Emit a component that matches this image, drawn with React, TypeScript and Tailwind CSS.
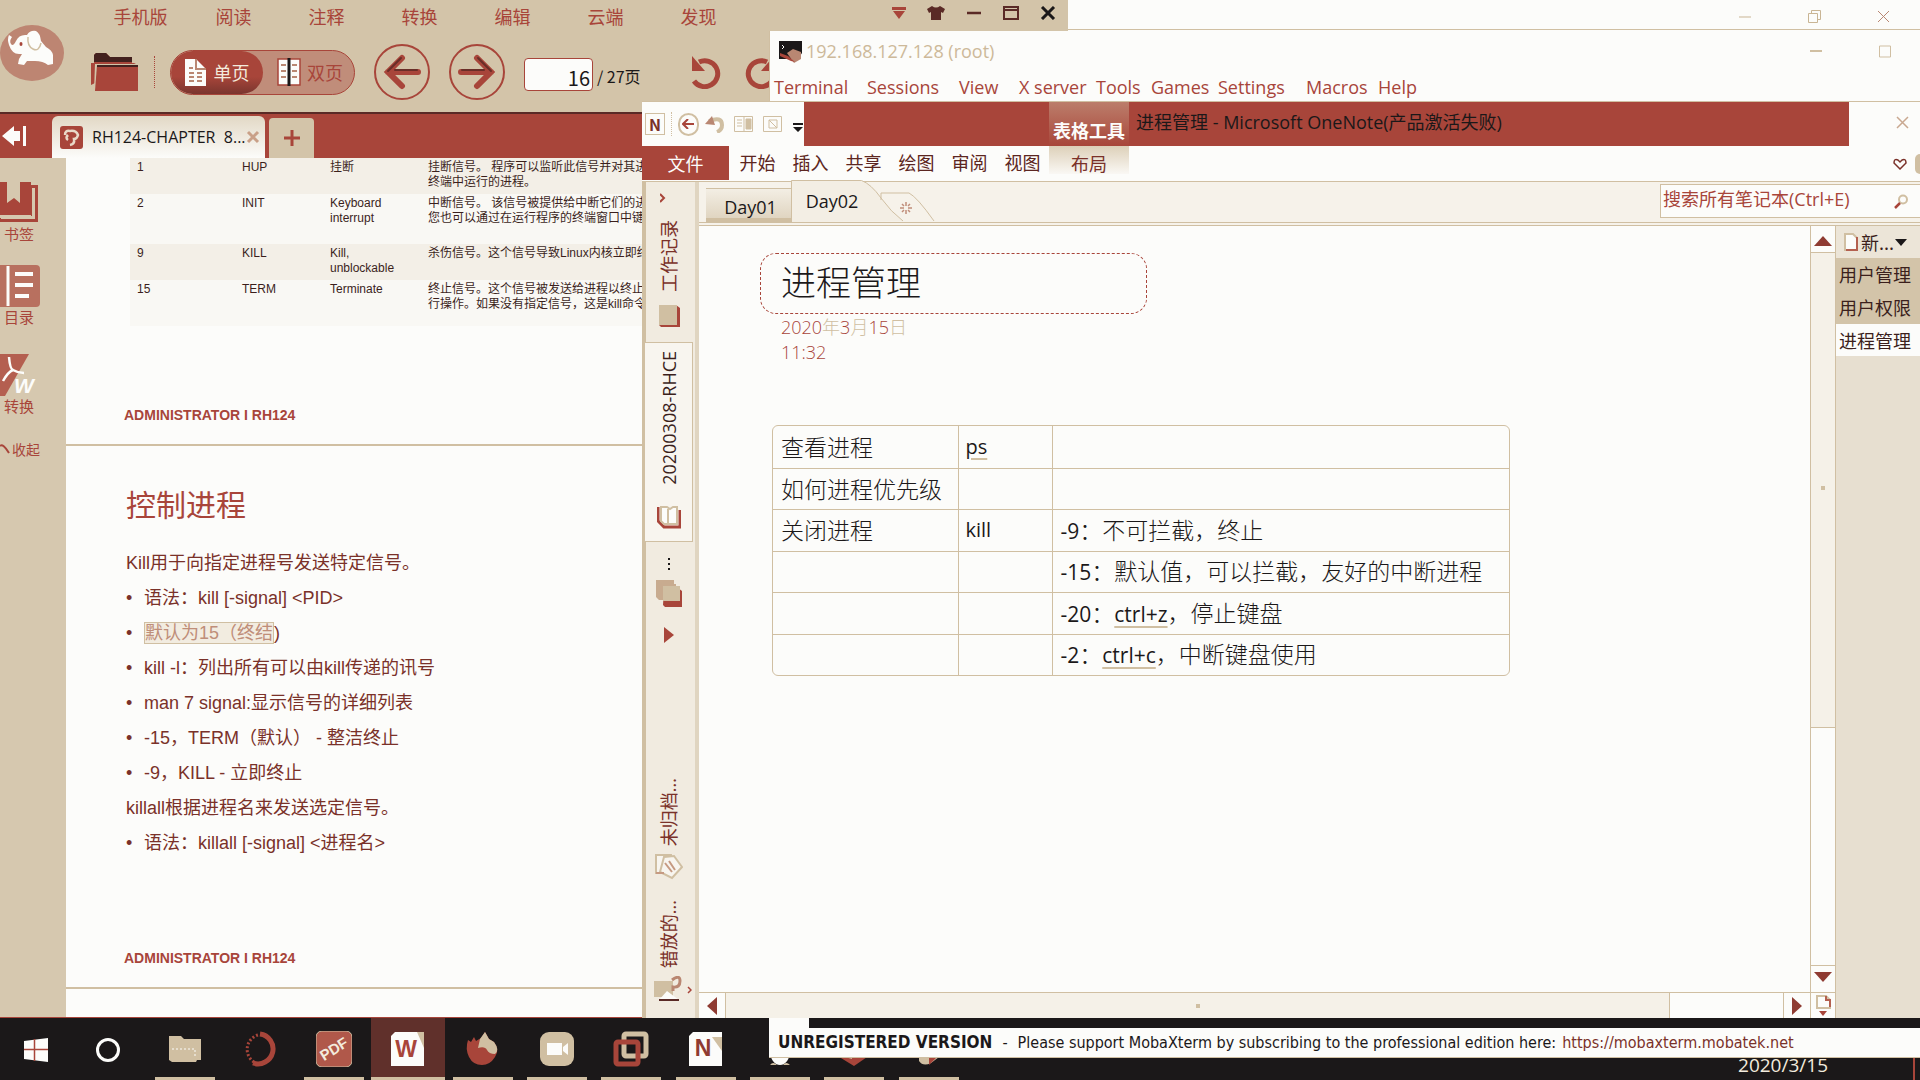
import React from "react";

const TASK_SLOTS = [
  "folder",
  "swirl",
  "pdf",
  "wps",
  "firefox",
  "zoom",
  "vmware",
  "onenote",
  "qq",
  "moba",
  "paint",
] as const;

const SIGNALS = [
  { n: "1", name: "HUP", def: ["挂断"], text: ["挂断信号。 程序可以监听此信号并对其进行", "终端中运行的进程。"], h: "h-9 bg-[#f3efe7]" },
  { n: "2", name: "INIT", def: ["Keyboard", "interrupt"], text: ["中断信号。 该信号被提供给中断它们的进程", "您也可以通过在运行程序的终端窗口中键入"], h: "h-[50px] bg-[#f9f8f4]" },
  { n: "9", name: "KILL", def: ["Kill,", "unblockable"], text: ["杀伤信号。这个信号导致Linux内核立即终止"], h: "h-9 bg-[#f3efe7]" },
  { n: "15", name: "TERM", def: ["Terminate"], text: ["终止信号。这个信号被发送给进程以终止执", "行操作。如果没有指定信号，这是kill命令的"], h: "h-[46px] bg-[#f9f8f4]" },
];

function PdfHeader() {
  return (
    <header className="flex h-[112px] bg-[#d3c4a9]">
      <div className="w-[90px] shrink-0 pt-6">
        <svg viewBox="0 0 64 58" className="h-[58px] w-16" aria-label="logo">
          <ellipse cx="32" cy="29" rx="32" ry="28" fill="#bd8572" />
          <path
            d="M9 11q-2 4 0 10q3 9 10 9l3 0-3 5-1 5 6 1 3-4 8 0q8 0 13 4l5-1 0-9q-1-5-7-8l-5-6q-1-8-5-10q-6-1-9 4q-8-1-11 6q-3 6-5 3q-2-3 1-7z"
            fill="#fcfcfa"
          />
          <ellipse cx="21" cy="20" rx="1.500" ry="2" fill="#a8453a" />
          <path d="M28 13q-1 9 5 12t8-6" stroke="#d0bfa2" strokeWidth="1.500" fill="none" />
        </svg>
      </div>
      <div className="flex min-w-0 flex-1 flex-col">
        <div className="flex h-[34px] shrink-0 items-center">
          <nav className="flex pb-0.5 pl-1">
            {["手机版", "阅读", "注释", "转换", "编辑", "云端", "发现"].map((t) => (
              <a key={t} href="#" className="w-[93px] text-center text-[18px] leading-6 text-[#a8453a]">
                {t}
              </a>
            ))}
          </nav>
          <div className="ml-auto flex items-center gap-[21px] pr-3 pb-2 text-[#a8453a]">
            <button aria-label="菜单">
              <svg viewBox="0 0 14 14" className="size-3.5" fill="currentColor">
                <path d="M0 1h14v3H0zM1 5h12l-6 8z" />
              </svg>
            </button>
            <button aria-label="皮肤">
              <svg viewBox="0 0 18 14" className="h-3.5 w-[18px]" fill="#5a2a26">
                <path d="M5 0q4 3 8 0l5 3-2 4-2-1v8H4V6L2 7 0 3z" />
              </svg>
            </button>
            <button aria-label="最小化">
              <svg viewBox="0 0 16 14" className="h-3.5 w-4" stroke="#5a2a26" strokeWidth="2.500">
                <path d="M1 7h14" />
              </svg>
            </button>
            <button aria-label="最大化">
              <svg viewBox="0 0 16 14" className="h-3.5 w-4" stroke="#5a2a26" strokeWidth="2" fill="none">
                <path d="M1 1h14v12H1zM1 4h14" />
              </svg>
            </button>
            <button aria-label="关闭">
              <svg viewBox="0 0 16 14" className="h-3.5 w-4" stroke="#1b1819" strokeWidth="3">
                <path d="M2 1l12 12M14 1L2 13" />
              </svg>
            </button>
          </div>
        </div>
        <div className="flex h-[76px] shrink-0 items-center">
          <button aria-label="打开">
            <svg viewBox="0 0 48 38" className="h-[38px] w-12">
              <path d="M1 32V10h3V2l2-2h10l4 4h22v6h4" fill="#a8453a" />
              <path d="M4 8V2l2-2h10l4 4h22v5H4z" fill="#43211e" />
              <path d="M5 11h43l-2 27H4z" fill="#d3c4a9" />
              <path d="M7 12h41v26H5z" fill="#a8453a" />
              <path d="M7 13h41" stroke="#43211e" strokeWidth="2" />
            </svg>
          </button>
          <span className="mr-[15px] ml-4 h-8 border-l border-dotted border-[#a8453a]" />
          <div className="flex h-[45px] w-[185px] shrink-0 overflow-hidden rounded-full border border-[#a8453a] bg-[#c08d7a]">
            <button className="flex w-[92px] items-center justify-center gap-2 rounded-full bg-gradient-to-b from-[#a8453a] from-60% to-[#7a352e] text-[18px] text-[#f3ebdd]">
              <svg viewBox="0 0 21 27" className="h-[27px] w-[21px]">
                <path d="M0 0h11l10 10v17H0z" fill="#fcfcfa" />
                <path d="M11 0v10h10M4 9h4M4 14h5m3 0h5M4 18h5m3 0h5M4 22h5m3 0h5" stroke="#b98772" strokeWidth="2" fill="none" />
              </svg>
              单页
            </button>
            <button className="flex flex-1 items-center gap-1.5 pl-3.5 text-[18px] text-[#a8453a]">
              <svg viewBox="0 0 24 28" className="h-7 w-6">
                <path d="M1 1h22v26H1z" fill="#fcfcfa" stroke="#a8453a" strokeWidth="1.500" />
                <path d="M12 0v28" stroke="#1b1819" strokeWidth="3" />
                <path d="M4 7h5M4 13h5M4 19h5m6-12h5m-5 6h5m-5 6h5" stroke="#b98772" strokeWidth="2" />
              </svg>
              双页
            </button>
          </div>
          <button aria-label="上一页" className="ml-[19px] flex size-14 shrink-0 items-center justify-center rounded-full border-2 border-[#a8453a]">
            <svg viewBox="0 0 38 36" className="h-9 w-[38px]" fill="none" stroke="#a8453a" strokeWidth="6" strokeLinecap="round">
              <path d="M35 18H5M19 4L5 18l14 14" />
              <path d="M18 4L5 17M12 16h22" stroke="#6a2e28" strokeWidth="2" />
            </svg>
          </button>
          <button aria-label="下一页" className="ml-[19px] flex size-14 shrink-0 items-center justify-center rounded-full border-2 border-[#a8453a]">
            <svg viewBox="0 0 38 36" className="h-9 w-[38px]" fill="none" stroke="#a8453a" strokeWidth="6" strokeLinecap="round">
              <path d="M3 18h30M19 4l14 14-14 14" />
              <path d="M20 4l13 13M4 16h22" stroke="#6a2e28" strokeWidth="2" />
            </svg>
          </button>
          <input
            aria-label="页码"
            defaultValue="16"
            className="ml-[19px] mt-1 h-[33px] w-[69px] rounded-sm border border-[#a8453a] bg-[#fcfcfa] pt-1.5 pr-0.5 text-right text-[20px] text-[#1b1819]"
          />
          <span className="ml-1 pt-2 text-[16px] text-[#1b1819]">/ 27页</span>
          <div className="ml-[50px] flex gap-4 text-[#a8453a]">
            <button aria-label="撤销">
              <svg viewBox="0 0 34 34" className="size-[34px]" fill="none" stroke="currentColor" strokeWidth="5">
                <path d="M8 7a13 13 0 1 1-5 19" />
                <path d="M1 1v15h13z" fill="currentColor" stroke="none" />
              </svg>
            </button>
            <button aria-label="重做">
              <svg viewBox="0 0 34 34" className="size-[34px]" fill="none" stroke="currentColor" strokeWidth="5">
                <path d="M26 7a13 13 0 1 0 5 19" />
                <path d="M33 1v15H20z" fill="currentColor" stroke="none" />
              </svg>
            </button>
          </div>
        </div>
      </div>
    </header>
  );
}

function PdfTabs() {
  return (
    <div className="flex h-[46px] shrink-0 items-end border-t-2 border-[#5a2a26] bg-[#a8453a]">
      <button aria-label="收起侧栏" className="w-[52px] pb-3">
        <svg viewBox="0 0 24 20" className="ml-0.5 h-5 w-6" fill="#fcfcfa">
          <path d="M0 10L12 0v5h6v10h-6v5zM21 0h3v20h-3z" />
        </svg>
      </button>
      <div className="flex h-[42px] w-[213px] items-center rounded-t-md bg-gradient-to-b from-[#e2d8c5] to-[#fcfcfa] pl-2">
        <svg viewBox="0 0 23 23" className="size-[23px] shrink-0">
          <rect width="23" height="23" rx="3" fill="#a8453a" />
          <path d="M5 9q0-5 5-4 6-1 8 4-1 4-4 4 1 5-4 6M8 9q-3 3 0 5" stroke="#e9d9c8" strokeWidth="2.500" fill="none" />
        </svg>
        <span className="ml-[9px] whitespace-pre font-['Open_Sans','Noto_Sans_CJK_SC',sans-serif] text-[16px] text-[#1b1819]">RH124-CHAPTER  8...</span>
        <button aria-label="关闭标签">
          <svg viewBox="0 0 14 14" className="size-3.5" stroke="#c9a088" strokeWidth="3">
            <path d="M2 2l10 10M12 2L2 12" />
          </svg>
        </button>
      </div>
      <button aria-label="新建标签" className="ml-1 flex h-10 w-[45px] items-center justify-center rounded-t-sm bg-[#d3c4a9]">
        <svg viewBox="0 0 16 16" className="size-4" stroke="#a8453a" strokeWidth="3">
          <path d="M8 0v16M0 8h16" />
        </svg>
      </button>
    </div>
  );
}

function PdfSidebar() {
  const label = "h-5 pl-1 text-[15px] leading-5 text-[#a8453a]";
  return (
    <aside className="w-[66px] shrink-0 bg-[#d6c8af] pt-6">
      <button className="flex h-[83px] w-full flex-col items-start">
        <svg viewBox="0 0 40 42" className="h-[42px] w-10">
          <path d="M31 3h7v37H0v-4h31z" fill="#a8453a" />
          <path d="M0 0h31v33H0z" fill="#a8453a" />
          <path d="M32 6h3v31H1v-3h31z" fill="#d6c8af" />
          <path d="M7 0h13v21l-6-5-7 5z" fill="#d6c8af" />
        </svg>
        <span className={label}>书签</span>
      </button>
      <button className="flex h-[89px] w-full flex-col items-start">
        <svg viewBox="0 0 40 42" className="h-[42px] w-10">
          <rect x="-4" width="44" height="42" rx="4" fill="#b8705f" />
          <path d="M8 1v40" stroke="#fcfcfa" strokeWidth="3" />
          <path d="M15 9h18M15 20h18M15 31h14" stroke="#fcfcfa" strokeWidth="4" />
        </svg>
        <span className={label}>目录</span>
      </button>
      <button className="flex h-[85px] w-full flex-col items-start">
        <svg viewBox="0 0 40 42" className="h-[42px] w-10">
          <path d="M0 0h29L5 42H0z" fill="#b45f50" />
          <path d="M9 3q1 12 4 13 5 3 11 3M13 16Q8 18 3 27" stroke="#fcfcfa" strokeWidth="2.500" fill="none" />
          <text x="14" y="39" fontFamily="Liberation Sans" fontStyle="italic" fontWeight="700" fontSize="21" fill="#fcfcfa">W</text>
        </svg>
        <span className={label}>转换</span>
      </button>
      <button className="flex h-5 items-center text-[14px] text-[#a8453a]">
        <svg viewBox="0 0 10 10" className="mr-0.5 size-2.5" stroke="currentColor" strokeWidth="2" fill="none">
          <path d="M0 2q3-3 9 7" />
        </svg>
        收起
      </button>
    </aside>
  );
}

function PdfDocument() {
  const bullets = [
    <>语法：kill [-signal] &lt;PID&gt;</>,
    <>
      <span className="border border-[#d0bfa2] bg-[#f2ece0] text-[#bf8e79]">默认为15（终结</span>)
    </>,
    <>kill -l：列出所有可以由kill传递的讯号</>,
    <>man 7 signal:显示信号的详细列表</>,
    <>-15，TERM（默认） - 整洁终止</>,
    <>-9，KILL - 立即终止</>,
  ];
  const li = "flex before:w-[18px] before:content-['•']";
  return (
    <main className="min-w-0 flex-1 overflow-hidden bg-[#fcfcfa] font-['Liberation_Sans','Noto_Sans_CJK_SC',sans-serif] whitespace-nowrap">
      <section className="h-[288px] border-b-2 border-[#d0bfa2] pl-16">
        <table className="w-full table-fixed border-collapse text-[12px] leading-[15px] text-[#3b1f1c]">
          <colgroup>
            <col className="w-[105px]" />
            <col className="w-[88px]" />
            <col className="w-[98px]" />
            <col />
          </colgroup>
          <tbody>
            {SIGNALS.map((s) => (
              <tr key={s.n} className={s.h}>
                <td className="pt-0.5 pl-[7px] align-top">{s.n}</td>
                <td className="pt-0.5 pl-[7px] align-top">{s.name}</td>
                <td className="pt-0.5 pl-[7px] align-top">{s.def.map((d) => <div key={d}>{d}</div>)}</td>
                <td className="pt-0.5 pl-[7px] align-top">{s.text.map((d) => <div key={d}>{d}</div>)}</td>
              </tr>
            ))}
          </tbody>
        </table>
        <p className="mt-[79px] -ml-1.5 text-[14px] leading-5 font-bold text-[#a8453a]">ADMINISTRATOR I RH124</p>
      </section>
      <section className="h-[543px] border-b-2 border-[#d0bfa2] pt-10 pl-[60px] text-[18px] leading-[35px] text-[#7a3129]">
        <h1 className="mb-5 text-[30px] leading-10 text-[#a8453a]">控制进程</h1>
        <p>Kill用于向指定进程号发送特定信号。</p>
        <ul>
          {bullets.map((b, i) => (
            <li key={i} className={li}>
              <span>{b}</span>
            </li>
          ))}
        </ul>
        <p>killall根据进程名来发送选定信号。</p>
        <ul>
          <li className={li}>
            <span>语法：killall [-signal] &lt;进程名&gt;</span>
          </li>
        </ul>
        <p className="mt-[87px] -ml-0.5 text-[14px] leading-5 font-bold text-[#a8453a]">ADMINISTRATOR I RH124</p>
      </section>
    </main>
  );
}

function PdfWindow() {
  return (
    <section className="absolute top-0 bottom-[62px] left-0 flex w-[1068px] flex-col border-b border-[#a8453a]">
      <PdfHeader />
      <PdfTabs />
      <div className="flex min-h-0 flex-1">
        <PdfSidebar />
        <PdfDocument />
      </div>
    </section>
  );
}

function MobaTitle() {
  const menu: [string, string][] = [
    ["Terminal", "w-[93px]"],
    ["Sessions", "w-[92px]"],
    ["View", "w-[60px]"],
    ["X server", "w-[77px]"],
    ["Tools", "w-[55px]"],
    ["Games", "w-[67px]"],
    ["Settings", "w-[88px]"],
    ["Macros", "w-[72px]"],
    ["Help", "w-[60px]"],
  ];
  return (
    <>
      <section className="absolute top-0 right-0 left-[1068px] flex h-[30px] items-center justify-end gap-14 border-b border-[#d0bfa2] bg-[#fcfcfa] pt-1 pr-[30px] text-[#c9b594]">
        <button aria-label="最小化">
          <svg viewBox="0 0 13 13" className="size-[13px]" stroke="currentColor"><path d="M0 7h12" /></svg>
        </button>
        <button aria-label="还原">
          <svg viewBox="0 0 13 13" className="size-[13px]" stroke="currentColor" fill="none"><path d="M.5 3.500h9v9h-9zM3.500 3V.5h9v9H10" /></svg>
        </button>
        <button aria-label="关闭">
          <svg viewBox="0 0 13 13" className="size-[13px]" stroke="#b98772"><path d="M1 1l11 11M12 1L1 12" /></svg>
        </button>
      </section>
      <section className="absolute top-[31px] right-0 left-[769px] h-[100px] border-l border-[#d0bfa2] bg-[#fcfcfa] font-['Open_Sans','Noto_Sans_CJK_SC',sans-serif]">
        <div className="flex h-[41px] items-center pl-[9px]">
          <svg viewBox="0 0 23 22" className="h-[22px] w-[23px]">
            <path d="M0 0h23v12l-4 6H0z" fill="#1b1819" />
            <path d="M8 12l6-4 8 3v7l-7 4z" fill="#b98772" />
            <path d="M1 12l8 3 7 6-4-1-11-5z" fill="#a8453a" />
            <path d="M3 4l2 2-2 2" stroke="#fcfcfa" fill="none" />
          </svg>
          <span className="ml-1 text-[18px] text-[#cdb999]">192.168.127.128 (root)</span>
          <div className="ml-auto flex gap-14 pr-7 text-[#d0bfa2]">
            <button aria-label="最小化"><svg viewBox="0 0 13 13" className="size-[13px]" stroke="currentColor" strokeWidth="2"><path d="M0 6h12" /></svg></button>
            <button aria-label="最大化"><svg viewBox="0 0 13 13" className="size-[13px]" stroke="currentColor" fill="none"><path d="M.5 1h11v11h-11z" /></svg></button>
          </div>
        </div>
        <nav className="flex h-[30px] items-center pl-1 text-[18px] text-[#a8453a]">
          {menu.map(([t, w]) => (
            <a key={t} href="#" className={w}>{t}</a>
          ))}
        </nav>
      </section>
    </>
  );
}

function OneNoteTop() {
  return (
    <>
      <div className="flex h-11 shrink-0 bg-[#fcfcfa]">
        <div className="flex w-[162px] items-center gap-1.5 pl-[3px]">
          <span className="flex h-[22px] w-[22px] items-center justify-center border border-[#d0bfa2] text-[16px] leading-none font-bold text-[#7a3129]">N</span>
          <span className="h-6 border-l border-dotted border-[#d0bfa2]" />
          <button aria-label="返回" className="flex size-[23px] items-center justify-center rounded-full border-2 border-[#d0bfa2]">
            <svg viewBox="0 0 12 10" className="h-2.5 w-3" stroke="#a8453a" strokeWidth="2" fill="none"><path d="M12 5H1M6 0L1 5l5 5" /></svg>
          </button>
          <button aria-label="撤消">
            <svg viewBox="0 0 19 18" className="h-[18px] w-[19px]" fill="none"><path d="M4 6q13-5 13 4 0 5-5 7" stroke="#d0bfa2" strokeWidth="4" /><path d="M0 9l7-8 3 9z" fill="#b98772" /></svg>
          </button>
          <button aria-label="停靠">
            <svg viewBox="0 0 19 18" className="ml-1 h-[18px] w-[19px]" fill="none" stroke="#d0bfa2"><path d="M.5 1.500h18v15H.5zM10 1v16M3 5h5M3 8h5M3 11h5" /><path d="M12 4h5v10h-5z" fill="#d0bfa2" /></svg>
          </button>
          <button aria-label="全页">
            <svg viewBox="0 0 19 18" className="ml-1 h-[18px] w-[19px]" fill="none" stroke="#d0bfa2"><path d="M.5 1.500h18v15H.5z" /><path d="M6 5h8v8H6zM6 5l8 8" /></svg>
          </button>
          <button aria-label="自定义" className="pt-2">
            <svg viewBox="0 0 12 10" className="ml-1 h-2.5 w-3" fill="#1b1819"><path d="M1 0h10v2H1zM1 4h10L6 9z" /></svg>
          </button>
        </div>
        <div className="flex min-w-0 flex-1 items-center bg-[#a8453a]">
          <div className="ml-[245px] flex h-full w-20 items-end justify-center bg-gradient-to-b from-[#bb7d6b] to-[#a8453a] pb-1 text-[18px] leading-6 font-bold text-[#fcfcfa]">表格工具</div>
          <h1 className="pb-1 pl-[7px] font-['Open_Sans','Noto_Sans_CJK_SC',sans-serif] text-[18px] whitespace-nowrap text-[#1b1819]">进程管理 - Microsoft OneNote(产品激活失败)</h1>
        </div>
        <div className="flex w-[71px] items-center justify-end pr-[11px]">
          <button aria-label="关闭"><svg viewBox="0 0 13 13" className="mb-1 size-[13px]" stroke="#c9a890" strokeWidth="1.500"><path d="M1 1l11 11M12 1L1 12" /></svg></button>
        </div>
      </div>
      <div className="flex h-9 shrink-0 border-b border-[#d0bfa2] bg-[#fcfcfa] text-[18px] text-[#5c2621]">
        <button className="h-[34px] w-[87px] bg-[#a8453a] text-[#fcfcfa]">文件</button>
        <nav className="flex pl-0.5">
          {["开始", "插入", "共享", "绘图", "审阅", "视图"].map((t) => (
            <button key={t} className="w-[53px] pb-0.5">{t}</button>
          ))}
        </nav>
        <button className="h-7 w-20 bg-gradient-to-b from-[#ddd0b9] to-[#faf8f4] pt-1 text-[#7a3129]">布局</button>
        <div className="ml-auto flex items-center gap-2">
          <button aria-label="喜欢"><svg viewBox="0 0 14 12" className="h-3 w-3.5" fill="none" stroke="#7a3129" strokeWidth="1.500"><path d="M7 11L1 5q0-5 4-3l2 2 2-2q4-2 4 3z" /></svg></button>
          <span className="h-5 w-[5px] rounded-l-full bg-[#d0bfa2]" />
        </div>
      </div>
    </>
  );
}

function NotebookRail() {
  const side = "rotate-180 font-['Open_Sans','Noto_Sans_CJK_SC',sans-serif] text-[18px] leading-6 whitespace-nowrap [text-orientation:sideways] [writing-mode:vertical-rl]";
  return (
    <aside className="flex w-[57px] shrink-0 flex-col items-center border-r-4 border-l-4 border-r-[#e0d5c1] border-l-[#d0bfa2] bg-[#f1ebe0] pr-1 text-[#7a3129]">
      <button aria-label="展开" className="mt-2 mr-3 h-4">
        <svg viewBox="0 0 6 10" className="h-2.5 w-1.5" fill="none" stroke="#a8453a" strokeWidth="2"><path d="M0 1l4 4-4 4" /></svg>
      </button>
      <button className="mt-3.5 flex h-[114px] flex-col items-center gap-3">
        <span className={side}>工作记录</span>
        <svg viewBox="0 0 24 24" className="size-6"><path d="M2 1h17l4 3v19H4l-2-2z" fill="#a8453a" /><path d="M2 1h18v20H2z" fill="#d0bfa2" /></svg>
      </button>
      <button className="mt-2 flex h-[200px] w-[49px] shrink-0 flex-col items-center justify-between border border-[#d0bfa2] bg-[#f8f5ef] pt-2 pb-3 text-[#3b1f1c]">
        <span className={side}>20200308-RHCE</span>
        <svg viewBox="0 0 24 24" className="size-6" fill="none"><path d="M1 2v14l6 6h16V5" stroke="#a8453a" strokeWidth="3" /><path d="M4 2h6l3 2 3-2h4v17H7l-3-3z" fill="#fcfcfa" stroke="#d0bfa2" strokeWidth="2" /><path d="M11 4v14" stroke="#d0bfa2" strokeWidth="2" /></svg>
      </button>
      <span className="mt-4 flex flex-col gap-[3px]">
        <i className="block size-0.5 bg-[#1b1819]" />
        <i className="block size-0.5 bg-[#1b1819]" />
        <i className="block size-0.5 bg-[#1b1819]" />
      </span>
      <button aria-label="所有笔记本" className="mt-2.5">
        <svg viewBox="0 0 26 27" className="h-[27px] w-[26px]"><path d="M0 0h18v4h2v16H3l-3-3z" fill="#c8ab8f" /><path d="M8 8h14l4 3v16H9l-2-2z" fill="#a8453a" /><path d="M7 6h17v15H7z" fill="#d0bfa2" /></svg>
      </button>
      <button aria-label="更多" className="mt-5">
        <svg viewBox="0 0 10 16" className="h-4 w-2.5" fill="#a8453a"><path d="M0 0l10 8-10 8z" /></svg>
      </button>
      <button className="mt-auto flex flex-col items-center gap-2">
        <span className={side}>未归档...</span>
        <svg viewBox="0 0 28 26" className="h-[26px] w-7" fill="#f8f5ef" stroke="#d0bfa2" strokeWidth="2"><path d="M1 1h15l3 18H1z" /><path d="M9 3l10-1 8 11-10 11-12-6z" /><path d="M10 9l7 9M14 7l6 9M1 19h8" stroke="#c69a82" /></svg>
      </button>
      <button className="mt-5 mb-4 flex flex-col items-center gap-2">
        <span className={side}>错放的...</span>
        <svg viewBox="0 0 38 26" className="ml-2 h-[26px] w-[38px]" fill="none"><path d="M0 5h19v16H0z" fill="#d0bfa2" /><path d="M5 24l8-9 12 9z" fill="#fcfcfa" /><path d="M5 24h20" stroke="#5a2a26" strokeWidth="2" /><path d="M18 4q8-6 8 1t-7 6v4" stroke="#b98772" strokeWidth="3" /><path d="M34 11l3 3-3 3" stroke="#a8453a" strokeWidth="1.500" /></svg>
      </button>
    </aside>
  );
}

function PageTabs() {
  return (
    <div className="flex h-11 shrink-0 items-end border-b-4 border-double border-[#d0bfa2] bg-[#f6f2ea]">
      <button className="ml-[7px] h-[34px] w-[85px] border-t border-b-4 border-[#d0bfa2] bg-gradient-to-b from-[#f3eee4] to-[#e0d5c1] pt-1.5 pl-1 font-['Open_Sans',sans-serif] text-[18px] leading-6 text-[#1b1819]">Day01</button>
      <button className="relative h-[42px] w-[92px] pr-2.5 font-['Open_Sans',sans-serif] text-[18px] leading-6 text-[#1b1819]">
        <svg viewBox="0 0 145 42" className="absolute top-0 left-0 h-[42px] w-[145px]" fill="#f3eee4" stroke="#d0bfa2">
          <path d="M.5 42V.5h70Q80 4 90 18t22 23" />
          <path d="M90 20V13h28q8 4 25 28" fill="none" />
        </svg>
        <span className="relative">Day02</span>
      </button>
      <button aria-label="新建分区" className="relative ml-[17px] pb-2">
        <svg viewBox="0 0 12 12" className="size-3" stroke="#c08d7a" strokeWidth="1.500"><path d="M6 0v4M6 8v4M0 6h4M8 6h4M2 2l2 2M8 8l2 2M10 2L8 4M4 8l-2 2" /></svg>
      </button>
      <label className="mb-1 ml-auto flex h-[34px] w-[260px] items-center border-y border-l border-[#d0bfa2] bg-[#fcfcfa] pr-[11px]">
        <input aria-label="搜索" placeholder="搜索所有笔记本(Ctrl+E)" className="min-w-0 flex-1 bg-transparent pb-1 pl-0.5 font-['Open_Sans','Noto_Sans_CJK_SC',sans-serif] text-[18px] placeholder:text-[#a8453a]" />
        <svg viewBox="0 0 15 15" className="size-[15px]" fill="none"><circle cx="9" cy="5.500" r="4" stroke="#d0bfa2" strokeWidth="2" /><path d="M6 9l-5 5" stroke="#a8453a" strokeWidth="2.500" /></svg>
      </label>
    </div>
  );
}

function Latin({ children }: { children: React.ReactNode }) {
  return <span className="text-[21px] font-normal">{children}</span>;
}

const FLAGGED = "decoration-[#d0bfa2] decoration-2 underline-offset-4";

const NOTE_ROWS: React.ReactNode[][] = [
  ["查看进程", <u className={FLAGGED}>ps</u>, ""],
  ["如何进程优先级", "", ""],
  ["关闭进程", "kill", <><Latin>-9</Latin>：不可拦截，终止</>],
  ["", "", <><Latin>-15</Latin>：默认值，可以拦截，友好的中断进程</>],
  ["", "", <><Latin>-20</Latin>：<Latin><u className={FLAGGED}>ctrl+z</u></Latin>，停止键盘</>],
  ["", "", <><Latin>-2</Latin>：<Latin><u className={FLAGGED}>ctrl+c</u></Latin>，中断键盘使用</>],
];

function NoteCanvas() {
  return (
    <article className="min-w-0 flex-1 overflow-hidden bg-[#fcfcfa] pt-[27px] pl-[61px] whitespace-nowrap">
      <h2 className="flex h-[61px] w-[387px] items-center rounded-2xl border border-dashed border-[#a8453a] pb-1 pl-5 text-[35px] font-light text-[#1b1819]">进程管理</h2>
      <div className="pt-px pl-[21px] font-['Open_Sans','Noto_Sans_CJK_SC',sans-serif] text-[18px] leading-[25px] font-light text-[#a8453a]">
        <p>
          2020<span className="text-[#d0bfa2]">年</span>3<span className="text-[#d0bfa2]">月</span>15<span className="text-[#d0bfa2]">日</span>
        </p>
        <p>11:32</p>
      </div>
      <div className="mt-[60px] ml-3 w-[738px] overflow-hidden rounded-md border border-[#d0bfa2]">
        <table className="w-full table-fixed border-collapse font-['Open_Sans','Noto_Sans_CJK_SC',sans-serif] text-[#1b1819]">
          <colgroup>
            <col className="w-[185px]" />
            <col className="w-[94px]" />
            <col />
          </colgroup>
          <tbody>
            {NOTE_ROWS.map((row, i) => (
              <tr key={i} className="h-[42px] border-b border-[#d0bfa2] last:border-b-0 even:h-[41px]">
                <td className="border-r border-[#d0bfa2] pl-2 text-[23px] leading-8 font-light">{row[0]}</td>
                <td className="border-r border-[#d0bfa2] pl-[7px] text-[20px] leading-8">{row[1]}</td>
                <td className="pl-2 text-[23px] leading-8 font-light">{row[2]}</td>
              </tr>
            ))}
          </tbody>
        </table>
      </div>
    </article>
  );
}

function VerticalScroll() {
  return (
    <div className="flex w-[26px] shrink-0 flex-col border-x border-[#d0bfa2] bg-[#fcfcfa]">
      <button aria-label="向上" className="flex h-[27px] items-center justify-center border-b border-[#d0bfa2] pt-1">
        <svg viewBox="0 0 18 10" className="h-2.5 w-[18px]" fill="#8f3b32"><path d="M0 10L9 0l9 10z" /></svg>
      </button>
      <div className="flex h-[475px] items-center justify-center border-b border-[#d0bfa2] bg-[#f5f1e8]">
        <i className="mb-1 size-1 bg-[#d0bfa2]" />
      </div>
      <button aria-label="向下" className="mt-auto flex h-[27px] items-center justify-center border-t border-[#d0bfa2] pb-1">
        <svg viewBox="0 0 18 10" className="h-2.5 w-[18px]" fill="#8f3b32"><path d="M0 0h18L9 10z" /></svg>
      </button>
    </div>
  );
}

function HorizontalScroll() {
  return (
    <div className="flex h-[26px] shrink-0 border-t border-[#d0bfa2] bg-[#fcfcfa]">
      <button aria-label="向左" className="flex w-[27px] items-center justify-center border-r border-[#d0bfa2]">
        <svg viewBox="0 0 10 18" className="h-[18px] w-2.5" fill="#8f3b32"><path d="M10 0v18L0 9z" /></svg>
      </button>
      <div className="flex flex-1 items-center justify-center border-r border-[#d0bfa2] bg-[#f5f1e8]">
        <i className="size-1 bg-[#d0bfa2]" />
      </div>
      <div className="w-[113px]" />
      <button aria-label="向右" className="flex w-[27px] items-center justify-center border-l border-[#d0bfa2]">
        <svg viewBox="0 0 10 18" className="h-[18px] w-2.5" fill="#8f3b32"><path d="M0 0v18l10-9z" /></svg>
      </button>
      <button aria-label="下一页" className="flex w-[26px] flex-col items-center justify-center gap-0.5 border-x border-[#d0bfa2]">
        <svg viewBox="0 0 16 14" className="h-3.5 w-4" fill="none" stroke="#d0bfa2" strokeWidth="2"><path d="M2 13V1h9l4 4v8z" /><path d="M11 1v4h4v7" stroke="#b4604f" /></svg>
        <svg viewBox="0 0 8 5" className="h-[5px] w-2" fill="#a8453a"><path d="M0 0h8L4 5z" /></svg>
      </button>
    </div>
  );
}

function PageList() {
  return (
    <aside className="flex w-[84px] shrink-0 flex-col bg-[#e7dfd0] text-[18px] text-[#3b1f1c]">
      <button className="flex h-8 shrink-0 items-center bg-[#ece5d8] pl-2 whitespace-nowrap">
        <svg viewBox="0 0 14 18" className="mr-[3px] h-[18px] w-3.5" fill="#fcfcfa" stroke="#d0bfa2" strokeWidth="2"><path d="M1 1h8l4 4v12H1z" /><path d="M13 4v13H2" stroke="#b4604f" fill="none" /></svg>
        新...
        <svg viewBox="0 0 12 7" className="ml-px h-[7px] w-3" fill="#1b1819"><path d="M0 0h12L6 7z" /></svg>
      </button>
      <button className="h-[33px] shrink-0 bg-[#d3c4a9] pl-[3px] text-left">用户管理</button>
      <button className="h-[33px] shrink-0 bg-[#d3c4a9] pl-[3px] text-left">用户权限</button>
      <button className="h-8 shrink-0 bg-[#fcfcfa] pl-[3px] text-left">进程管理</button>
    </aside>
  );
}

function OneNoteWindow() {
  return (
    <section className="absolute top-[101px] right-0 bottom-[62px] left-[642px] flex flex-col border-t border-[#d0bfa2] bg-[#fcfcfa]">
      <OneNoteTop />
      <div className="flex min-h-0 flex-1">
        <NotebookRail />
        <div className="flex min-w-0 flex-1 flex-col">
          <PageTabs />
          <div className="flex min-h-0 flex-1">
            <div className="flex min-w-0 flex-1 flex-col">
              <div className="flex min-h-0 flex-1">
                <NoteCanvas />
                <VerticalScroll />
              </div>
              <HorizontalScroll />
            </div>
            <PageList />
          </div>
        </div>
      </div>
    </section>
  );
}

function TaskIcon({ name }: { name: (typeof TASK_SLOTS)[number] }) {
  const cls = "size-9";
  switch (name) {
    case "folder":
      return <svg viewBox="0 0 36 36" className={cls}><path d="M2 5h12l3 3h17v21h-4l-1 2H5l-3-2z" fill="#d0bfa2" /><path d="M5 18h23v8" stroke="#fcfcfa" strokeDasharray="2 2" fill="none" /></svg>;
    case "swirl":
      return <svg viewBox="0 0 36 36" className={cls} fill="none" stroke="#a8453a"><path d="M18 3a15 15 0 1 1-7 29" strokeWidth="5" /><path d="M12 31A15 15 0 0 1 16 4" strokeWidth="3" strokeDasharray="2 2" /></svg>;
    case "pdf":
      return <svg viewBox="0 0 36 36" className={cls}><rect width="36" height="36" rx="6" fill="#b0584a" stroke="#d0bfa2" /><text x="18" y="23" textAnchor="middle" transform="rotate(-32 18 18)" fontFamily="Liberation Sans" fontWeight="700" fontSize="15" fill="#f3ebdd">PDF</text></svg>;
    case "wps":
      return <svg viewBox="0 0 36 36" className={cls}><path d="M5 1h29v34H1V5z" fill="#fcfcfa" /><path d="M27 1h7v16z" fill="#d0bfa2" /><text x="16" y="26" textAnchor="middle" fontFamily="Liberation Sans" fontWeight="700" fontSize="23" fill="#a8453a">W</text></svg>;
    case "firefox":
      return <svg viewBox="0 0 36 36" className={cls}><path d="M3 9l3 2 3-5 2 4 5-3 4-6 4 7 5 3q6 8 1 15-5 8-13 8-9 0-13-8-4-8-1-17z" fill="#a8453a" /><path d="M15 8l5-7 4 7 5 3q6 8 1 12-6 0-8-4t-9-2z" fill="#d0bfa2" /></svg>;
    case "zoom":
      return <svg viewBox="0 0 36 36" className={cls}><rect x="1" y="1" width="34" height="34" rx="9" fill="#d0bfa2" /><path d="M8 12h15v12H8zM24 16l5-4v12l-5-4z" fill="#fcfcfa" /></svg>;
    case "vmware":
      return <svg viewBox="0 0 36 36" className={cls} fill="none" strokeWidth="5"><rect x="11" y="3" width="22" height="22" rx="2" stroke="#d0bfa2" /><rect x="3" y="11" width="22" height="22" rx="2" stroke="#a8453a" /></svg>;
    case "onenote":
      return <svg viewBox="0 0 36 36" className={cls}><path d="M5 1h29v34H1V5z" fill="#fcfcfa" /><path d="M24 6h10v14z" fill="#d0bfa2" /><text x="15" y="25" textAnchor="middle" fontFamily="Liberation Sans" fontWeight="700" fontSize="23" fill="#8f3b32">N</text></svg>;
    case "qq":
      return <svg viewBox="0 0 36 36" className={cls}><ellipse cx="18" cy="20" rx="10" ry="14" fill="#fcfcfa" /><path d="M8 34q3-4 7 0zM21 34q3-4 7 0z" fill="#d0bfa2" /></svg>;
    case "moba":
      return <svg viewBox="0 0 36 36" className={cls}><path d="M0 24h34L18 35z" fill="#a8453a" /><path d="M2 24h14v4z" fill="#d0bfa2" /></svg>;
    default:
      return <svg viewBox="0 0 36 36" className={cls}><path d="M8 26h20l-8 6q-8 4-12-2z" fill="#d0bfa2" /><path d="M18 26h8l-8 8z" fill="#a8453a" /></svg>;
  }
}

function Taskbar() {
  const active = (n: string) => n === "wps";
  return (
    <footer className="absolute right-0 bottom-0 left-0 flex h-[62px] bg-[#1b1819]">
      <button aria-label="开始" className="flex w-[72px] items-center justify-center pt-0.5">
        <svg viewBox="0 0 24 24" className="size-6"><path d="M0 3l24-3v24L0 21z" fill="#fcfcfa" /><path d="M10.500 1v22M0 11.500h24" stroke="#a8453a" strokeWidth="1.500" /></svg>
      </button>
      <button aria-label="搜索" className="flex w-[76px] items-center justify-center pt-0.5 pr-1">
        <span className="size-6 rounded-full border-[3px] border-[#fcfcfa]" />
      </button>
      <div className="grid w-[818px] grid-cols-11">
        {TASK_SLOTS.map((n) => (
          <button key={n} aria-label={n} className={active(n) ? "flex flex-col items-center border-b-[3px] border-[#d0bfa2] bg-[#60302b] pt-[13px]" : "flex flex-col items-center pt-[13px]"}>
            <TaskIcon name={n} />
            {n !== "swirl" && !active(n) && <span className="mt-auto h-[3px] w-[60px] bg-[#d0bfa2]" />}
          </button>
        ))}
      </div>
      <div className="ml-auto flex items-end pr-[5px]">
        <time className="mr-[85px] pb-[3px] font-['Open_Sans',sans-serif] text-[19px] leading-6 text-[#f3ebdd]">2020/3/15</time>
        <span className="h-[23px] w-0.5 bg-[#a8453a]" />
      </div>
    </footer>
  );
}

function LicenseBanner() {
  return (
    <section className="absolute right-0 bottom-[22px] left-[769px]">
      <div className="h-2.5 w-10 bg-[#fcfcfa]" />
      <p className="flex h-[30px] items-center border-b border-[#d0bfa2] bg-[#fcfcfa] pl-[9px] font-['DejaVu_Sans_Condensed','DejaVu_Sans',sans-serif] text-[16px] whitespace-pre text-[#1b1819]">
        <b className="text-[17px]">UNREGISTERED VERSION</b>
        <span className="mx-2.5">-</span>
        Please support MobaXterm by subscribing to the professional edition here:
        <a href="https://mobaxterm.mobatek.net" className="ml-1.5 text-[#7a3129]">https://mobaxterm.mobatek.net</a>
      </p>
    </section>
  );
}

export default function App() {
  return (
    <div className="relative h-screen overflow-hidden bg-[#fcfcfa] font-['Noto_Sans_CJK_SC',sans-serif]">
      <PdfWindow />
      <MobaTitle />
      <OneNoteWindow />
      <Taskbar />
      <LicenseBanner />
    </div>
  );
}
